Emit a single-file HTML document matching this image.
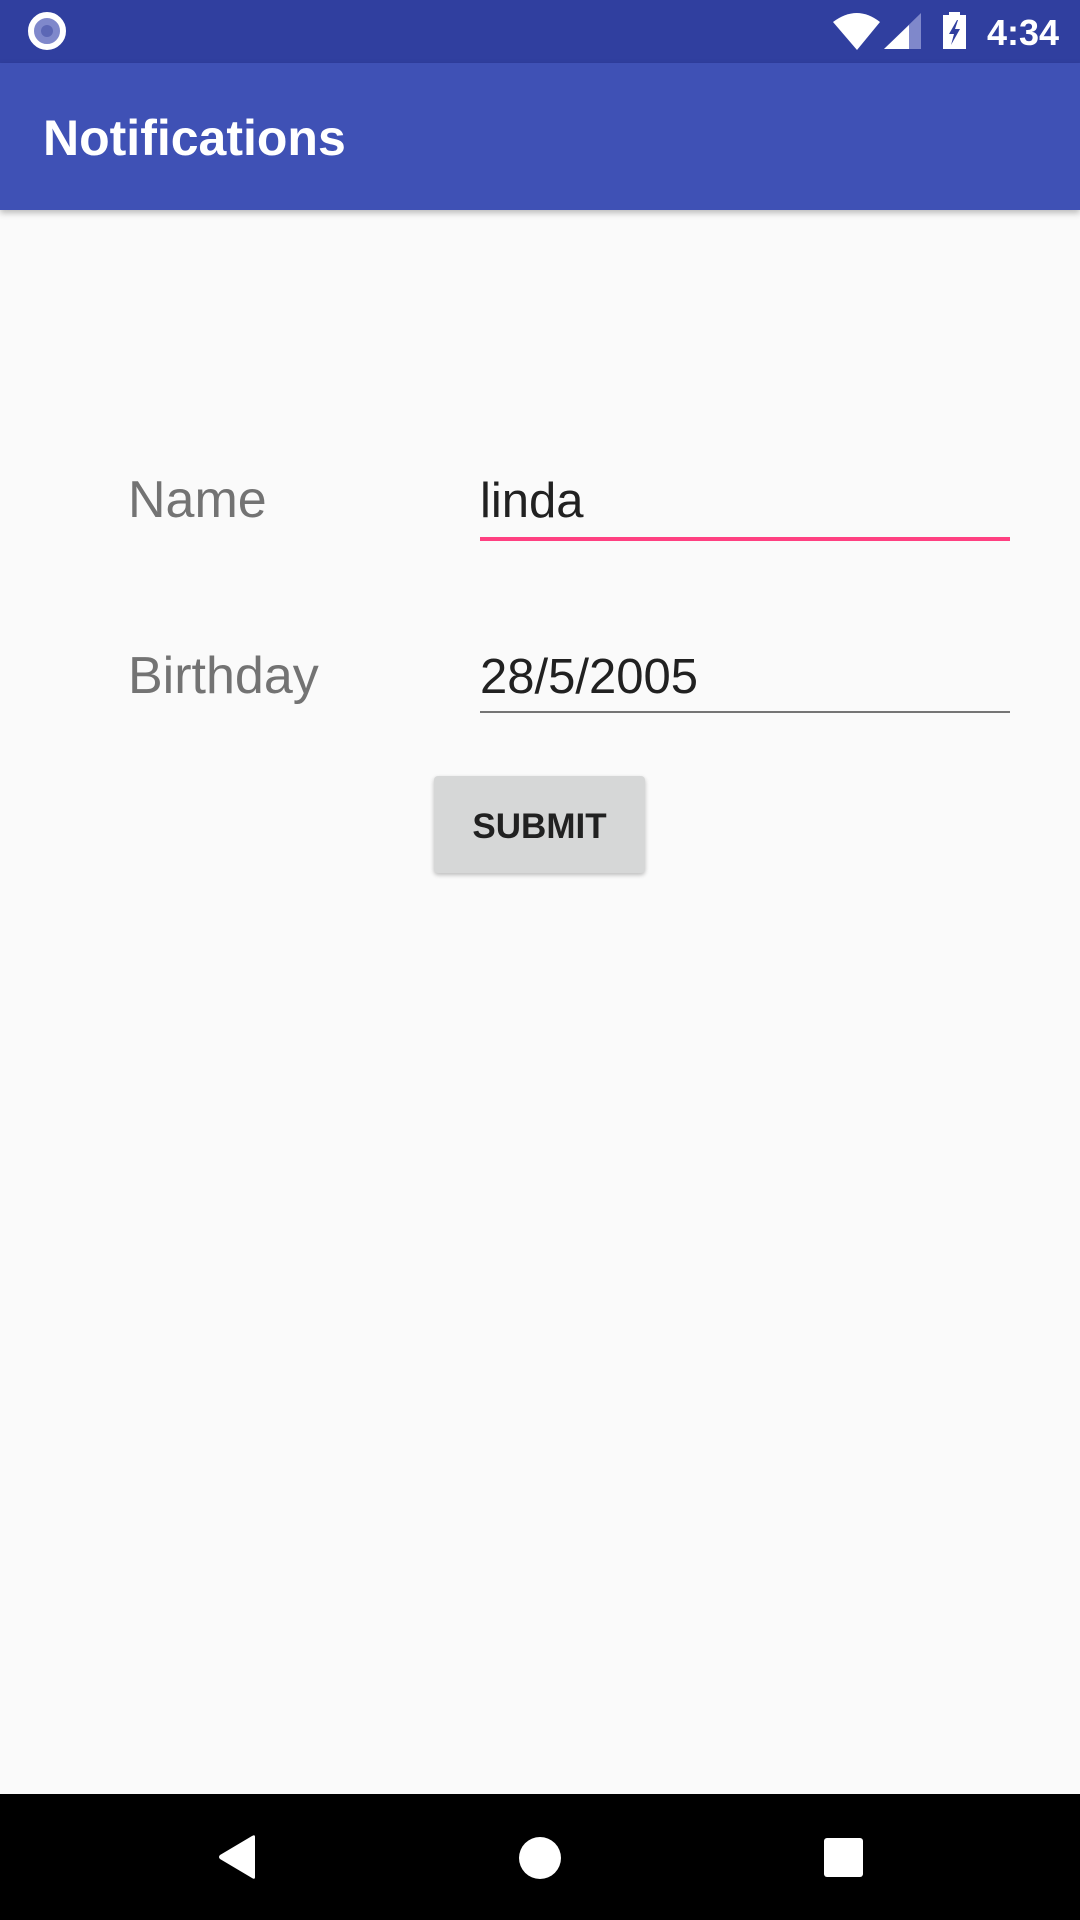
<!DOCTYPE html>
<html><head><style>
*{margin:0;padding:0;box-sizing:border-box}
body{width:1080px;height:1920px;background:#fafafa;font-family:"Liberation Sans",sans-serif;position:relative;overflow:hidden}
.abs{position:absolute}
</style></head><body>
<div class="abs" style="left:0;top:0;width:1080px;height:63px;background:#303f9f"></div>
<svg class="abs" style="left:0;top:0" width="1080" height="63">
<circle cx="47" cy="31" r="16" fill="#7f88cb" stroke="#fff" stroke-width="6"/>
<circle cx="47" cy="31" r="6" fill="#5c67b5"/>
<path d="M833 22 Q857 4 880 22 L857 50 Z" fill="#fff"/>
<path d="M921 13 L921 49 L884 49 Z" fill="#7f88cb"/>
<path d="M909 25 L909 49 L884 49 Z" fill="#fff"/>
<rect x="949" y="12" width="11" height="4" fill="#fff"/>
<rect x="943" y="15" width="23" height="34" fill="#fff"/>
<path d="M957 20 L949 34 L954 34 L951 45 L960 29 L955 29 L958 20 Z" fill="#303f9f"/>
<text x="987" y="45" font-size="36" font-weight="bold" fill="#fff" font-family="Liberation Sans">4:34</text>
</svg>
<div class="abs" style="left:0;top:63px;width:1080px;height:147px;background:#3f51b5;box-shadow:0 3px 6px rgba(0,0,0,.25)"></div>
<div class="abs" style="left:43px;top:108px;font-size:50px;font-weight:bold;color:#fff;line-height:60px">Notifications</div>

<div class="abs" style="left:128px;top:470px;font-size:52px;color:#737373;line-height:60px">Name</div>
<div class="abs" style="left:480px;top:471px;font-size:49px;color:#212121;line-height:60px">linda</div>
<div class="abs" style="left:480px;top:537px;width:530px;height:4px;background:#ff4081"></div>

<div class="abs" style="left:128px;top:646px;font-size:52px;color:#737373;line-height:60px">Birthday</div>
<div class="abs" style="left:480px;top:647px;font-size:49px;color:#212121;line-height:60px">28/5/2005</div>
<div class="abs" style="left:480px;top:711px;width:530px;height:2px;background:#757575"></div>

<div class="abs" style="left:434px;top:776px;width:211px;height:97px;background:#d6d7d7;border-radius:4px;box-shadow:0 2px 4px rgba(0,0,0,.25);text-align:center;font-size:35px;font-weight:bold;color:#212121;line-height:101px">SUBMIT</div>

<div class="abs" style="left:0;top:1794px;width:1080px;height:126px;background:#000"></div>
<svg class="abs" style="left:0;top:1794px" width="1080" height="126">
<path d="M255 43 L255 83 Q255 86 252 84 L220 65 Q218 63 220 61 L252 42 Q255 40 255 43 Z" fill="#fff"/>
<circle cx="540" cy="64" r="21" fill="#fff"/>
<rect x="824" y="44" width="39" height="39" rx="3" fill="#fff"/>
</svg>
</body></html>
